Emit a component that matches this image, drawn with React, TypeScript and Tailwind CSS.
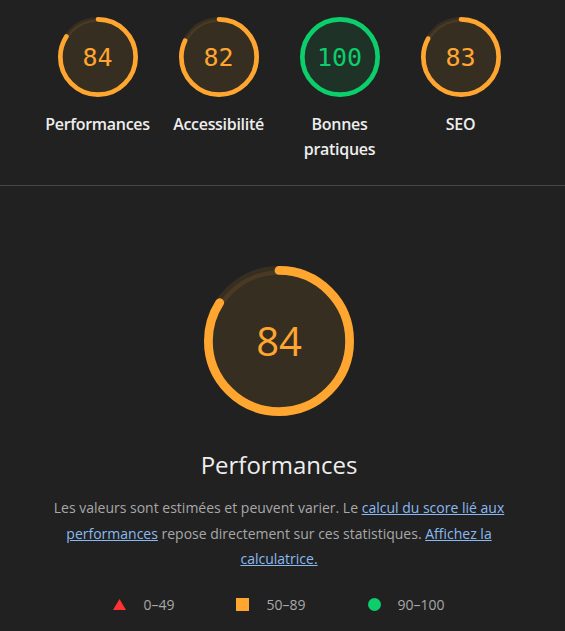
import type { ReactNode } from 'react';

const ORANGE = '#ffa630';
const GREEN = '#0cce6b';

const categories = [
  { label: 'Performances', score: 84, color: ORANGE },
  { label: 'Accessibilité', score: 82, color: ORANGE },
  { label: 'Bonnes pratiques', score: 100, color: GREEN },
  { label: 'SEO', score: 83, color: ORANGE },
];

function Gauge({ score, color, size, children }: { score: number; color: string; size: number; children: ReactNode }) {
  const r = 56.5;
  const c = 2 * Math.PI * r;
  return (
    <div className="relative shrink-0" style={{ width: size, height: size }}>
      <svg viewBox="0 0 120 120" width={size} height={size}>
        <circle cx="60" cy="60" r={r} fill={color} fillOpacity="0.1" stroke={color} strokeOpacity="0.1" strokeWidth="7" />
        <circle
          cx="60"
          cy="60"
          r={r}
          fill="none"
          stroke={color}
          strokeWidth="7"
          strokeLinecap={score === 100 ? 'butt' : 'round'}
          strokeDasharray={`${(score / 100) * c} ${c}`}
          transform="rotate(-90 60 60)"
        />
      </svg>
      <div className="absolute inset-0 flex items-center justify-center" style={{ color }}>
        {children}
      </div>
    </div>
  );
}

export default function App() {
  return (
    <div className="min-h-screen bg-[#212121] font-['Open_Sans',sans-serif]">
      {/* Category gauges */}
      <div className="flex justify-center pt-[17px] pb-[23px] pr-[7px]">
        {categories.map((cat) => (
          <div key={cat.label} className="w-[121px] flex flex-col items-center">
            <Gauge score={cat.score} color={cat.color} size={80}>
              <span className="font-['DejaVu_Sans_Mono',monospace] text-[25px] leading-none">{cat.score}</span>
            </Gauge>
            <div className="mt-[15px] text-center text-[16px] leading-[25px] font-semibold text-[#eeeeee] px-1 tracking-[-0.3px]">
              {cat.label}
            </div>
          </div>
        ))}
      </div>

      <div className="h-px bg-[#474747]" />

      {/* Performance detail */}
      <div className="flex flex-col items-center pt-[80px] pr-[7px]">
        <Gauge score={84} color={ORANGE} size={150}>
          <span className="text-[40px] leading-none">84</span>
        </Gauge>
        <h2 className="mt-[33px] text-[24px] leading-[32px] text-[#eeeeee]">Performances</h2>
        <p className="mt-[14px] max-w-[470px] text-center text-[14px] leading-[25.5px] text-[#a8a8a8]">
          Les valeurs sont estimées et peuvent varier. Le{' '}
          <a href="#" className="text-[#8ab9f1] underline">calcul du score lié aux performances</a> repose directement sur ces statistiques.{' '}
          <a href="#" className="text-[#8ab9f1] underline">Affichez la calculatrice.</a>
        </p>

        <div className="mt-[23px] flex items-center gap-[62px] text-[14px] leading-[20px] text-[#a8a8a8]">
          <div className="flex items-center gap-[17px]">
            <svg width="13" height="11" viewBox="0 0 13 11">
              <polygon points="6.5,0 13,11 0,11" fill="#ff3333" />
            </svg>
            <span>0–49</span>
          </div>
          <div className="flex items-center gap-[17px]">
            <span className="w-[13px] h-[13px] bg-[#ffa630]" />
            <span>50–89</span>
          </div>
          <div className="flex items-center gap-[17px]">
            <span className="w-[13px] h-[13px] rounded-full bg-[#0cce6b]" />
            <span>90–100</span>
          </div>
        </div>
      </div>
    </div>
  );
}
